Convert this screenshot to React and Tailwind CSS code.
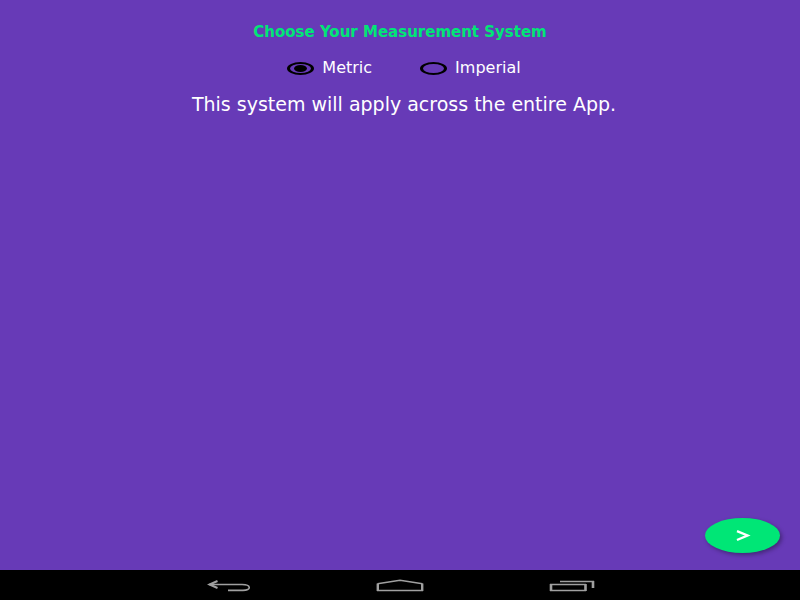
import { useState } from "react";

const systems = ["Metric", "Imperial"];

function SystemOption({ name, checked, onSelect }) {
  return (
    <label className="flex cursor-pointer items-center gap-2 text-base leading-4">
      <input
        type="radio"
        name="measurement-system"
        value={name}
        checked={checked}
        onChange={() => onSelect(name)}
        className="grid h-[13px] w-[27px] appearance-none place-items-center rounded-[50%] border-x-3 border-y-2 border-black before:h-[7px] before:w-[13px] before:rounded-[50%] checked:before:bg-black"
      />
      {name}
    </label>
  );
}

function NavigationBar() {
  return (
    <nav className="flex h-[30px] items-center justify-center gap-[125px] bg-black text-[#a0a0a0]">
      <button aria-label="Back" className="h-[30px] w-12">
        <svg viewBox="0 0 48 30" className="h-full w-full" fill="none" stroke="currentColor">
          <path d="M6 14.5H39C48.5 14.5 48.5 20.4 40 20.4H25" strokeWidth="1.6" />
          <path d="M14.5 11L6.5 14.5L14.5 18" strokeWidth="2" />
        </svg>
      </button>
      <button aria-label="Home" className="h-[30px] w-12">
        <svg viewBox="0 0 48 30" className="h-full w-full" fill="none" stroke="currentColor">
          <path d="M1.5 13.8L24 10.3L46.5 13.8" strokeWidth="1.4" />
          <path d="M1 20.5H47" strokeWidth="1.3" />
          <path d="M1.8 13.5V21M46.2 13.5V21" strokeWidth="2.4" />
        </svg>
      </button>
      <button aria-label="Recent apps" className="h-[30px] w-12">
        <svg viewBox="0 0 48 30" className="h-full w-full" fill="none" stroke="currentColor">
          <path d="M1 14.5H37M1 20.5H37M11 11.5H45" strokeWidth="1.3" />
          <path d="M2 14V21M36.5 14V21M44 11V18" strokeWidth="2.6" />
        </svg>
      </button>
    </nav>
  );
}

export default function App() {
  const [system, setSystem] = useState("Metric");

  return (
    <div className="flex min-h-screen flex-col bg-[#673ab7] font-['DejaVu_Sans',sans-serif] text-white">
      <main className="relative flex flex-1 flex-col items-center px-4 pt-6 text-center">
        <h1 className="text-[15px] leading-4 font-bold text-[#00e676]">
          Choose Your Measurement System
        </h1>
        <fieldset aria-label="Measurement system" className="mt-5 flex justify-center gap-12 pl-2">
          {systems.map((name) => (
            <SystemOption key={name} name={name} checked={system === name} onSelect={setSystem} />
          ))}
        </fieldset>
        <p className="mt-4 pl-2 text-[19px] leading-6">This system will apply across the entire App.</p>
        <button
          aria-label="Next"
          className="absolute right-5 bottom-[17px] grid h-[35px] w-[75px] place-items-center rounded-[50%] bg-[#00e676] shadow-[2px_2px_4px_rgba(0,0,0,0.35)]"
        >
          <svg viewBox="0 0 16 12" className="h-3 w-4" fill="none" stroke="white" strokeWidth="2.4">
            <path d="M2 1.2L12.5 5.5L2 10" />
          </svg>
        </button>
      </main>
      <NavigationBar />
    </div>
  );
}
